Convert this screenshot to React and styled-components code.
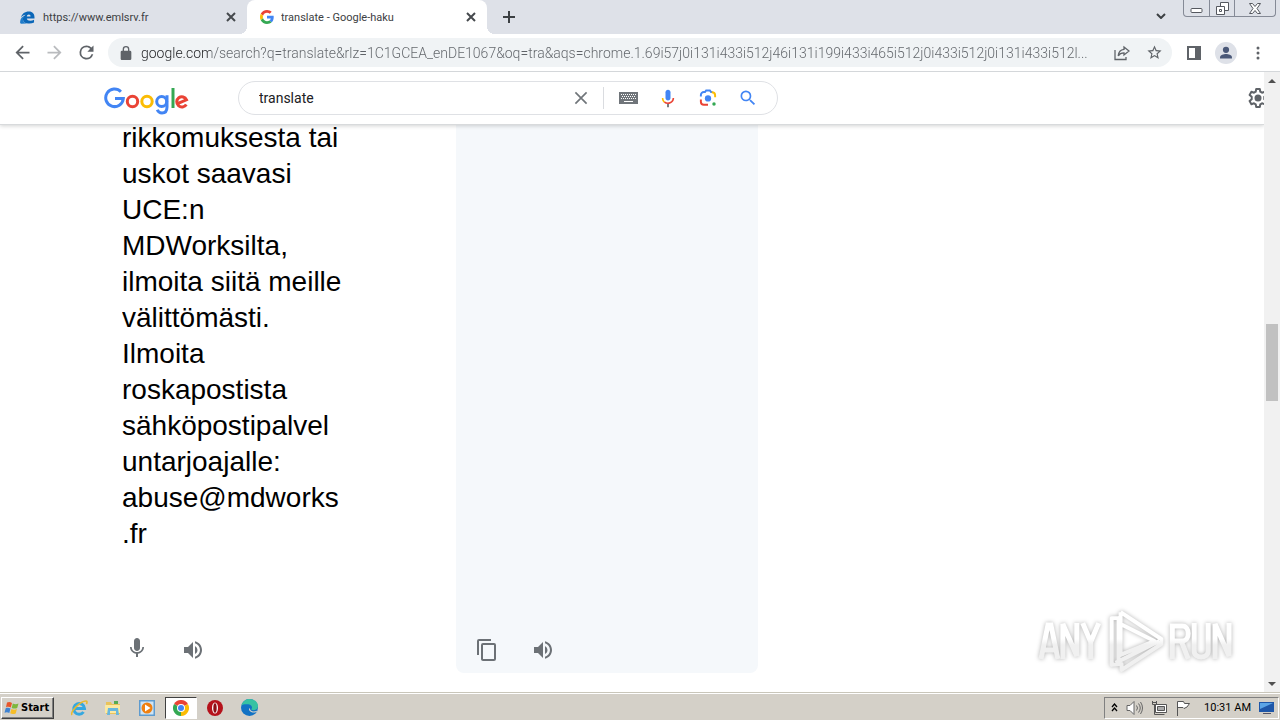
import React from 'react';
import styled, { createGlobalStyle, css } from 'styled-components';

const Global = createGlobalStyle`
  * { box-sizing: border-box; }
  body { margin: 0; background: #fff; font-family: Roboto, "Noto Sans", sans-serif; }
  button, input, textarea { font: inherit; color: inherit; margin: 0; padding: 0; border: 0; background: none; outline: 0; }
  svg { display: block; }
`;

const ui = css`font-family: Roboto, "Noto Sans", sans-serif;`;

const Desktop = styled.div`
  display: flex;
  flex-direction: column;
  height: 100vh;
  min-height: 480px;
  overflow: hidden;
`;

const TabStrip = styled.header`
  display: flex;
  align-items: flex-start;
  height: 34px;
  background: #dee1e8;
  flex: none;
`;

const Tab = styled.div`
  position: relative;
  display: flex;
  align-items: center;
  gap: 7px;
  width: ${(p) => (p.$active ? 240 : 247)}px;
  height: 34px;
  padding: 0 8px 0 ${(p) => (p.$active ? 13 : 20)}px;
  border-radius: 8px 8px 0 0;
  color: #3c4043;
  ${ui}
  font-size: 11px;
  ${(p) => p.$active && css`
    background: #fff;
    &::before, &::after {
      content: '';
      position: absolute;
      bottom: 0;
      width: 8px;
      height: 8px;
    }
    &::before {
      right: 100%;
      background: radial-gradient(circle at 0 0, transparent 8px, #fff 8px);
    }
    &::after {
      left: 100%;
      background: radial-gradient(circle at 100% 0, transparent 8px, #fff 8px);
    }
  `}
`;

const TabTitle = styled.span`
  flex: 1;
  white-space: nowrap;
  overflow: hidden;
`;

const IconButton = styled.button`
  display: flex;
  align-items: center;
  justify-content: center;
  flex: none;
  width: ${(p) => p.$size || 32}px;
  height: ${(p) => p.$size || 32}px;
  color: ${(p) => p.$color || '#5f6368'};
  border-radius: 50%;
`;

const NewTab = styled(IconButton)`margin: 1px 0 0 6px;`;

const Caption = styled.div`
  display: flex;
  margin: 0 4px 0 6px;
  border: 1px solid #858a96;
  border-top: 0;
  border-radius: 0 0 4px 4px;
`;

const CaptionButton = styled.button`
  display: flex;
  align-items: center;
  justify-content: center;
  width: ${(p) => (p.$wide ? 41 : 25)}px;
  height: 16px;
  & + & { border-left: 1px solid #858a96; }
`;

const Spacer = styled.div`flex: 1;`;

const Toolbar = styled.div`
  display: flex;
  align-items: center;
  height: 38px;
  padding: 0 6px;
  border-bottom: 1px solid #d4d7da;
  background: #fff;
  flex: none;
`;

const AddressBar = styled.div`
  display: flex;
  align-items: center;
  flex: 1;
  min-width: 0;
  height: 29px;
  margin: 0 6px;
  padding: 0 2px 0 12px;
  border-radius: 15px;
  background: #f0f3f5;
`;

const UrlInput = styled.input`
  flex: 1;
  min-width: 0;
  margin-left: 9px;
  ${ui}
  font-size: 14px;
  font-weight: 300;
  color: transparent;
  background: linear-gradient(to right, #202124 70px, #5f6368 70px);
  background-clip: text;
`;

const Viewport = styled.div`
  display: flex;
  flex: 1;
  min-height: 0;
`;

const Page = styled.main`
  flex: 1;
  min-width: 0;
  overflow: hidden;
  background: #fff;
`;

const SearchHeader = styled.div`
  position: relative;
  z-index: 1;
  display: flex;
  align-items: center;
  height: 53px;
  padding-left: 104px;
  background: #fff;
  border-bottom: 1px solid #d8dadc;
  box-shadow: 0 1px 4px rgba(32, 33, 36, 0.2);
`;

const LogoLink = styled.a`
  display: block;
  width: 86px;
  height: 28px;
  margin: 6px 48px 0 0;
`;

const SearchBox = styled.form`
  display: flex;
  align-items: center;
  width: 540px;
  height: 34px;
  padding: 0 13px 0 20px;
  border: 1px solid #dfe1e5;
  border-radius: 17px;
`;

const SearchInput = styled.input`
  flex: 1;
  min-width: 0;
  font-size: 14px;
  color: #202124;
`;

const SearchTools = styled.div`
  display: flex;
  align-items: center;
  height: 22px;
  margin-left: 6px;
  padding-left: 8px;
  border-left: 1px solid #dadce0;
  gap: 8px;
`;

const SettingsClip = styled.div`
  width: 18px;
  overflow: hidden;
`;

const Translator = styled.section`
  display: flex;
  height: 100%;
  padding-left: 104px;
  margin-top: -5px;
`;

const Pane = styled.div`
  display: flex;
  flex-direction: column;
  width: ${(p) => (p.$target ? 302 : 352)}px;
  height: 553px;
  padding: 0 ${(p) => (p.$target ? 16 : 18)}px;
  background: ${(p) => (p.$target ? '#f5f8fb' : '#fff')};
  border-radius: 0 0 8px 8px;
`;

const SourceText = styled.textarea`
  display: block;
  flex: 1;
  width: 240px;
  resize: none;
  overflow: hidden;
  font-family: "Liberation Sans", Arial, sans-serif;
  font-size: 28px;
  line-height: 36px;
  color: #000;
`;

const PaneActions = styled.div`
  display: flex;
  gap: 24px;
  margin: auto 0 7px -1px;
`;

const ScrollTrack = styled.div`
  display: flex;
  flex-direction: column;
  align-items: center;
  width: 16px;
  background: #f1f1f1;
  flex: none;
`;

const ScrollButton = styled.button`
  display: flex;
  align-items: center;
  justify-content: center;
  width: 16px;
  height: 17px;
`;

const ScrollThumb = styled.div`
  width: 12px;
  height: 77px;
  margin: 235px 0 auto;
  background: #c1c1c1;
`;

const Watermark = styled.div`
  position: absolute;
  right: 46px;
  bottom: 47px;
  z-index: 2;
  pointer-events: none;
  filter: drop-shadow(0 0 2px rgba(0, 0, 0, 0.3));
`;

const Taskbar = styled.footer`
  display: flex;
  align-items: center;
  height: 28px;
  padding: 2px 0 0 1px;
  border-top: 1px solid #c9c6ba;
  background: #d4d0c8;
  box-shadow: inset 0 1px 0 #fff;
  flex: none;
`;

const StartButton = styled.button`
  display: flex;
  align-items: center;
  gap: 1px;
  height: 22px;
  width: 53px;
  padding-left: 2px;
  border: 1px solid;
  border-color: #fff #404040 #404040 #fff;
  box-shadow: inset -1px -1px 0 #808080;
  font-family: "DejaVu Sans Condensed", "DejaVu Sans", sans-serif;
  font-size: 11px;
  font-weight: 700;
  color: #000;
`;

const QuickLaunch = styled.div`
  display: flex;
  gap: 2px;
  margin-left: 9px;
`;

const TaskButton = styled.button`
  display: flex;
  align-items: center;
  justify-content: center;
  width: 32px;
  height: 22px;
  ${(p) => p.$pressed && css`
    background: #fff;
    border: 1px solid;
    border-color: #404040 #fff #fff #404040;
  `}
`;

const Tray = styled.div`
  display: flex;
  align-items: center;
  gap: 8px;
  height: 22px;
  padding: 0 3px 0 6px;
  margin-right: 1px;
  border: 1px solid;
  border-color: #808080 #fff #fff #808080;
  ${ui}
  font-size: 11px;
  color: #000;
`;

const Clock = styled.time`
  margin-left: 5px;
  white-space: nowrap;
`;

const Svg = ({ s = 16, w, h, vb = '0 0 24 24', children, ...rest }) => (
  <svg width={w || s} height={h || s} viewBox={vb} fill="currentColor" aria-hidden="true" {...rest}>{children}</svg>
);

const Close = ({ s = 10, sw = 2 }) => (
  <Svg s={s} vb="0 0 10 10"><path d="M1 1l8 8M9 1l-8 8" stroke="currentColor" strokeWidth={sw} /></Svg>
);

const GoogleG = () => (
  <Svg s={14} vb="0 0 48 48">
    <path fill="#EA4335" d="M24 9.5c3.54 0 6.71 1.22 9.21 3.6l6.85-6.85C35.9 2.38 30.47 0 24 0 14.62 0 6.51 5.38 2.56 13.22l7.98 6.19C12.43 13.72 17.74 9.5 24 9.5z" />
    <path fill="#4285F4" d="M46.98 24.55c0-1.57-.15-3.09-.38-4.55H24v9.02h12.94c-.58 2.96-2.26 5.48-4.78 7.18l7.73 6c4.51-4.18 7.09-10.36 7.09-17.65z" />
    <path fill="#FBBC05" d="M10.53 28.59c-.48-1.45-.76-2.99-.76-4.59s.27-3.14.76-4.59l-7.98-6.19C.92 16.46 0 20.12 0 24c0 3.88.92 7.54 2.56 10.78l7.97-6.19z" />
    <path fill="#34A853" d="M24 48c6.48 0 11.93-2.13 15.89-5.81l-7.73-6c-2.15 1.45-4.92 2.3-8.16 2.3-6.26 0-11.57-4.22-13.47-9.91l-7.98 6.19C6.51 42.62 14.62 48 24 48z" />
  </Svg>
);

const EdgeLegacy = () => (
  <Svg w={16} h={13} vb="0 0 17 14">
    <path fill="#0b67b8" d="M1 7C2 3 5 .6 9.500 .6c4 0 6 2.600 6 6.400v1.200H7.200c.3 1.700 1.800 2.300 3.700 2.300 1.500 0 2.900-.4 4.100-1v3c-1.500.7-3.100 1-4.900 1C5.700 13.500 3 11.600 3 8.500c0-2 1.200-3.600 3-4.500C3.500 4.300 2 5.500 1 7zm6.200-1.200h4.100c0-1.300-.7-2.100-1.900-2.100-1.300 0-2 .8-2.200 2.100z" />
    <path fill="#1f7dcb" d="M0 13C0 8 2.500 6 4.500 5.500 3.500 6.500 3 7.500 3 8.500c0 2.600 1.800 4.500 4.500 5L1 13.600z" />
  </Svg>
);

const GoogleLogo = () => (
  <svg width="86" height="28" viewBox="0 0 86 28" fill="none" strokeWidth="3" role="img" aria-label="Google">
    <path stroke="#4285F4" d="M16.900 4.700A8.800 8.800 0 1 0 19.300 11.600H11" />
    <circle stroke="#EA4335" cx="28.500" cy="14.500" r="5.200" />
    <circle stroke="#FBBC05" cx="43" cy="14.500" r="5.200" />
    <g stroke="#4285F4"><circle cx="57.700" cy="14.500" r="5" /><path d="M63 8.200v11.800c0 4.400-2.300 6-5 6-2.300 0-4-1.400-4.700-3.200" /></g>
    <path stroke="#34A853" d="M69 1v20" />
    <path stroke="#EA4335" d="M73.500 16.700l9-3.900a5.100 5.100 0 1 0-.2 4.600" />
  </svg>
);

const MicPath = 'M12 15c1.660 0 3-1.340 3-3V5c0-1.660-1.340-3-3-3S9 3.340 9 5v7c0 1.660 1.340 3 3 3z';

const ColorMic = () => (
  <Svg s={20}>
    <path fill="#4285f4" d={MicPath} />
    <path fill="#5f6368" d="M11 18.900h2V23h-2z" />
    <path fill="#fbbc04" d="M6.500 12H4.600c0 2.300 1 4.300 2.500 5.600l1.400-1.300C7.300 15.300 6.500 13.800 6.500 12z" />
    <path fill="#ea4335" d="M12 17.300c-1.300 0-2.500-.4-3.500-1.100l-1.400 1.400A7.600 7.600 0 0 0 12 19.300c4 0 7.400-3.200 7.400-7.300h-1.900c0 3-2.500 5.300-5.500 5.300z" />
  </Svg>
);

const Lens = () => (
  <Svg s={18} fill="none" strokeWidth="2.600">
    <path stroke="#4285f4" d="M2.500 10V8a4 4 0 0 1 4-4H8l1.500-2h5L16 4h2" />
    <path stroke="#fbbc04" d="M17 4.200c3 0 4.500 1.800 4.500 4.300V11" />
    <path stroke="#ea4335" d="M2.500 14v3a4 4 0 0 0 4 4H12" />
    <circle cx="12" cy="12.500" r="4.200" fill="#4285f4" />
    <circle cx="20" cy="20" r="2.300" fill="#34a853" />
  </Svg>
);

const Keyboard = () => (
  <Svg w={19} h={12} vb="0 0 19 12">
    <path fill="#70757a" d="M0 0h19v12H0z" />
    <path stroke="#fff" strokeDasharray="1 1" d="M2 2.500h15M3 4.500h14M2 6.500h15" />
    <path stroke="#fff" d="M5 9.500h9" />
  </Svg>
);

const Search = () => (
  <Svg s={20}><path d="M15.500 14h-.79l-.28-.27A6.470 6.470 0 0 0 16 9.500 6.500 6.500 0 1 0 9.500 16c1.610 0 3.090-.59 4.230-1.570l.27.28v.79l5 4.990L20.490 19l-4.990-5zm-6 0C7.010 14 5 11.990 5 9.500S7.010 5 9.500 5 14 7.010 14 9.500 11.990 14 9.500 14z" /></Svg>
);

const Gear = () => (
  <Svg s={24} fill="none" stroke="#5f6368" strokeWidth="2">
    <path strokeLinejoin="round" d="M10.200 3h3.600l.5 2.700 1.700 1 2.600-.9 1.800 3.100-2.100 1.800v2.600l2.100 1.800-1.800 3.100-2.600-.9-1.700 1-.5 2.700h-3.600l-.5-2.700-1.700-1-2.600.9-1.800-3.100 2.100-1.800v-2.600L3.600 8.900l1.800-3.100 2.600.9 1.700-1z" />
    <circle cx="12" cy="12" r="3.500" fill="#5f6368" stroke="none" />
  </Svg>
);

const Speaker = () => (
  <Svg s={24}><path d="M3 9v6h4l5 5V4L7 9H3zm13.500 3A4.500 4.500 0 0 0 14 7.970v8.050c1.480-.73 2.500-2.250 2.500-4.020zM14 3.230v2.060c2.890.86 5 3.540 5 6.710s-2.110 5.850-5 6.710v2.060c4.010-.91 7-4.490 7-8.770s-2.990-7.860-7-8.770z" /></Svg>
);

const Mic = () => (
  <Svg s={24} vb="0 2 24 24"><path d={MicPath} /><path d="M17.300 11c0 3-2.540 5.100-5.300 5.100S6.700 14 6.700 11H5c0 3.410 2.720 6.230 6 6.720V21h2v-3.280c3.280-.48 6-3.300 6-6.720z" /></Svg>
);

const Copy = () => (
  <Svg s={24}><path d="M16 1H4a2 2 0 0 0-2 2v14h2V3h12V1zm3 4H8a2 2 0 0 0-2 2v14c0 1.100.9 2 2 2h11a2 2 0 0 0 2-2V7a2 2 0 0 0-2-2zm0 16H8V7h11v14z" /></Svg>
);

const AnyRun = () => (
  <svg width="197" height="64" viewBox="0 0 198 64" fill="none" stroke="url(#fade)" strokeWidth="4" aria-label="ANY.RUN" role="img">
    <defs>
      <linearGradient id="fade" gradientUnits="userSpaceOnUse" x1="0" y1="30" x2="0" y2="36">
        <stop offset="0" stopColor="#fff" />
        <stop offset="1" stopColor="#f0f0f0" />
      </linearGradient>
    </defs>
    <g strokeWidth="5">
      <path d="M4 50l7-34h3l7 34M6 41h13" />
      <path d="M26 50V15l14 32V14" />
      <path d="M46 14l8 19 8-19M54 32v18" />
      <path d="M136 50V17h10c8 0 8 15 0 15h-9M145 32l7 18" />
      <path d="M158 14v28c0 8 14 8 14 0V14" />
      <path d="M179 50V15l14 32V14" />
    </g>
    <path strokeLinejoin="round" d="M84 3l41 27v5L85 61v-6l-10 1V9h7v42M84 3v43l34-14-34-17M79 54l44-22" />
  </svg>
);

const StartFlag = () => (
  <Svg s={16} vb="0 0 16 16">
    <path fill="#e8562b" d="M3 2.500C5 1.500 6.500 2 8 3L6.800 7.500C5.500 6.700 3.800 6.500 2 7.200z" />
    <path fill="#7db73c" d="M8.800 3.400c1.800 1 3.600 1 5.700 0l-1.300 4.500c-1.800.9-3.700.8-5.500 0z" />
    <path fill="#3f83d2" d="M1.700 8.200c1.900-.7 3.300-.5 4.800.4L5.300 13C3.800 12 2.200 12 .5 12.700z" />
    <path fill="#f6bd27" d="M7.400 9c1.900.9 3.600.9 5.500.1l-1.200 4.300c-2 .9-3.900.9-5.500-.1z" />
  </Svg>
);

const IE = () => (
  <Svg s={18} vb="0 0 18 18" fill="none">
    <path stroke="#35a8e0" strokeWidth="3" d="M4 9.500h10.500A5.400 5.400 0 1 0 13.500 13" />
    <path stroke="#e9b92c" strokeWidth="1.500" d="M2 16C0 13 10 2 16 2c1.500 0 1 2 .4 3" />
  </Svg>
);

const Explorer = () => (
  <Svg s={18} vb="0 0 18 18">
    <path fill="#e9c35b" d="M2 3h5l1 2h8v10H2z" /><path fill="#fbe9a2" d="M1 6h15v8H1z" />
    <path fill="#69b7dd" d="M4 9h10l1 7h-3v-4H6v4H3z" /><path fill="#56ab52" d="M10 2h4v3h-4z" />
  </Svg>
);

const MediaPlayer = () => (
  <Svg s={16} vb="0 0 16 16">
    <path fill="#5e9bcf" d="M0 0h16v16H0z" /><path fill="#cfe4f5" d="M1.500 1.500h13v13h-13z" />
    <circle cx="8" cy="8" r="5.500" fill="#f08010" /><path fill="#fff" d="M6 4.500l5.500 3.500L6 11.500z" />
  </Svg>
);

const Chrome = () => (
  <Svg s={16} vb="0 0 16 16">
    <path fill="#ea4335" d="M8 8L1.070 4a8 8 0 0 1 13.860 0z" />
    <path fill="#fbbc04" d="M8 8l6.930-4A8 8 0 0 1 8 16z" />
    <path fill="#34a853" d="M8 8v8A8 8 0 0 1 1.070 4z" />
    <circle cx="8" cy="8" r="4" fill="#fff" /><circle cx="8" cy="8" r="3" fill="#4285f4" />
  </Svg>
);

const Opera = () => (
  <Svg s={16} vb="0 0 16 16"><circle cx="8" cy="8" r="8" fill="#b5121b" /><ellipse cx="8" cy="8" rx="3" ry="5.500" fill="#fff" /><ellipse cx="8" cy="8" rx="1.700" ry="4.800" fill="#8c0f16" /></Svg>
);

const EdgeNew = () => (
  <Svg s={17} vb="0 0 16 16">
    <circle cx="8" cy="8" r="8" fill="#1272c4" />
    <path fill="#37c2a3" d="M.5 6C1.500 2.500 4.500 0 8 0c4.500 0 8 3 8 6.500 0 2.500-2 4-4.500 4-1.500 0-2.200-.6-1.500-1.300C11 8 10 5.500 7 5 4 4.600 1.500 5 .5 6z" />
    <path fill="#d4d0c8" d="M8.200 8.500c0 2.500 3 4 6.300 2.700.6-.2.800.2.500.6-1.300 1.500-6 1.200-7.300-1.300-.4-.8-.1-1.600.5-2z" />
  </Svg>
);

const lines = [
  'rikkomuksesta tai', 'uskot saavasi', 'UCE:n', 'MDWorksilta,', 'ilmoita siitä meille', 'välittömästi.',
  'Ilmoita', 'roskapostista', 'sähköpostipalvel', 'untarjoajalle:', 'abuse@mdworks', '.fr',
];

const url = 'google.com/search?q=translate&rlz=1C1GCEA_enDE1067&oq=tra&aqs=chrome.1.69i57j0i131i433i512j46i131i199i433i465i512j0i433i512j0i131i433i512l...';

export default function App() {
  return (
    <Desktop>
      <Global />
      <TabStrip>
        <Tab>
          <EdgeLegacy />
          <TabTitle>https://www.emlsrv.fr</TabTitle>
          <IconButton $size={16} $color="#45494d" aria-label="Close tab"><Close /></IconButton>
        </Tab>
        <Tab $active>
          <GoogleG />
          <TabTitle>translate - Google-haku</TabTitle>
          <IconButton $size={16} $color="#45494d" aria-label="Close tab"><Close /></IconButton>
        </Tab>
        <NewTab $color="#3c4043" aria-label="New tab">
          <Svg s={12} vb="0 0 12 12"><path d="M6 0v12M0 6h12" stroke="currentColor" strokeWidth="2" /></Svg>
        </NewTab>
        <Spacer />
        <IconButton $color="#3c4043" aria-label="Search tabs">
          <Svg w={10} h={6} vb="0 0 10 6" fill="none"><path d="M1 1l4 4 4-4" stroke="currentColor" strokeWidth="2" /></Svg>
        </IconButton>
        <Caption>
          <CaptionButton aria-label="Minimize"><Svg w={13} h={16} vb="0 0 13 16" fill="#fff" stroke="#55585f"><rect x="1" y="8.500" width="11" height="4" rx="1" /></Svg></CaptionButton>
          <CaptionButton aria-label="Restore"><Svg w={13} h={13} vb="0 0 13 13" fill="#fff" stroke="#55585f"><path d="M4.500 .5h8v8h-8z" /><path d="M.5 4.500h8v8h-8z" /><path d="M3.500 7.500h2v2h-2z" /></Svg></CaptionButton>
          <CaptionButton $wide aria-label="Close"><Svg w={12} h={11} vb="0 0 12 11" fill="#fff" stroke="#55585f"><path d="M.5 .5h3L6 3.500 8.500 .5h3L8 5.500l3.500 5h-3L6 7.500l-2.500 3h-3L4 5.500z" /></Svg></CaptionButton>
        </Caption>
      </TabStrip>
      <Toolbar>
        <IconButton aria-label="Back"><Svg s={21}><path d="M20 11H7.830l5.590-5.590L12 4l-8 8 8 8 1.410-1.410L7.830 13H20v-2z" /></Svg></IconButton>
        <IconButton $color="#b9bbbe" aria-label="Forward"><Svg s={21}><path d="M12 4l-1.410 1.410L16.170 11H4v2h12.170l-5.580 5.590L12 20l8-8z" /></Svg></IconButton>
        <IconButton aria-label="Reload"><Svg s={21}><path d="M17.650 6.350A7.960 7.960 0 0 0 12 4a8 8 0 1 0 7.730 10h-2.080A6 6 0 1 1 12 6c1.660 0 3.140.69 4.220 1.780L13 11h7V4l-2.350 2.350z" /></Svg></IconButton>
        <AddressBar>
          <Svg w={12} h={14} vb="4 1 16 21" fill="#5f6368"><path d="M18 8h-1V6A5 5 0 0 0 7 6v2H6a2 2 0 0 0-2 2v10c0 1.100.9 2 2 2h12a2 2 0 0 0 2-2V10a2 2 0 0 0-2-2zM9 6a3 3 0 0 1 6 0v2H9z" /></Svg>
          <UrlInput aria-label="Address" defaultValue={url} />
          <IconButton aria-label="Share"><Svg s={16} vb="0 0 16 16" fill="none" stroke="currentColor" strokeWidth="1.300"><path d="M1 5v9.500h11V12M10 2l5 4-5 4V7.800c-3 0-4.600 1-5.800 3C4.500 7.500 6.300 4.700 10 4.300z" /></Svg></IconButton>
          <IconButton aria-label="Bookmark"><Svg s={17}><path d="M22 9.240l-7.190-.62L12 2 9.190 8.630 2 9.240l5.460 4.730L5.820 21 12 17.270 18.180 21l-1.630-7.030L22 9.240zM12 15.400l-3.760 2.270 1-4.280-3.320-2.880 4.380-.38L12 6.100l1.710 4.040 4.380.38-3.320 2.880 1 4.280L12 15.400z" /></Svg></IconButton>
        </AddressBar>
        <IconButton aria-label="Side panel"><Svg s={14} vb="0 0 14 14"><path d="M0 0h14v14H0zm2 2v10h6V2z" fillRule="evenodd" /></Svg></IconButton>
        <IconButton aria-label="Profile">
          <Svg s={22}><circle cx="12" cy="12" r="12" fill="#dee1e8" /><circle cx="12" cy="8.500" r="3.400" fill="#4a5878" /><path fill="#4a5878" d="M5.500 18v-1.500c0-2.200 4-3.500 6.500-3.500s6.500 1.300 6.500 3.500V18z" /></Svg>
        </IconButton>
        <IconButton aria-label="Menu"><Svg w={4} h={14} vb="0 0 4 14"><circle cx="2" cy="2" r="1.500" /><circle cx="2" cy="7" r="1.500" /><circle cx="2" cy="12" r="1.500" /></Svg></IconButton>
      </Toolbar>
      <Viewport>
        <Page>
          <SearchHeader>
            <LogoLink href="#home"><GoogleLogo /></LogoLink>
            <SearchBox role="search">
              <SearchInput aria-label="Search" defaultValue="translate" />
              <IconButton type="button" $color="#70757a" aria-label="Clear"><Close s={14} sw={1.2} /></IconButton>
              <SearchTools>
                <IconButton type="button" aria-label="Keyboard"><Keyboard /></IconButton>
                <IconButton type="button" aria-label="Voice search"><ColorMic /></IconButton>
                <IconButton type="button" aria-label="Image search"><Lens /></IconButton>
                <IconButton type="button" $color="#4285f4" aria-label="Search"><Search /></IconButton>
              </SearchTools>
            </SearchBox>
            <Spacer />
            <SettingsClip><IconButton $size={24} aria-label="Settings"><Gear /></IconButton></SettingsClip>
          </SearchHeader>
          <Translator>
            <Pane>
              <SourceText aria-label="Source text" spellCheck={false} defaultValue={lines.join('\n')} />
              <PaneActions>
                <IconButton $color="#6c7176" aria-label="Speak"><Mic /></IconButton>
                <IconButton $color="#6c7176" aria-label="Listen"><Speaker /></IconButton>
              </PaneActions>
            </Pane>
            <Pane $target>
              <PaneActions>
                <IconButton $color="#6c7176" aria-label="Copy"><Copy /></IconButton>
                <IconButton $color="#6c7176" aria-label="Listen"><Speaker /></IconButton>
              </PaneActions>
            </Pane>
          </Translator>
        </Page>
        <ScrollTrack>
          <ScrollButton aria-label="Scroll up"><Svg w={8} h={4} vb="0 0 8 4" fill="#505050"><path d="M0 4l4-4 4 4z" /></Svg></ScrollButton>
          <ScrollThumb />
          <ScrollButton aria-label="Scroll down"><Svg w={8} h={4} vb="0 0 8 4" fill="#505050"><path d="M0 0h8L4 4z" /></Svg></ScrollButton>
        </ScrollTrack>
      </Viewport>
      <Watermark><AnyRun /></Watermark>
      <Taskbar>
        <StartButton><StartFlag />Start</StartButton>
        <QuickLaunch>
          <TaskButton aria-label="Internet Explorer"><IE /></TaskButton>
          <TaskButton aria-label="Explorer"><Explorer /></TaskButton>
          <TaskButton aria-label="Media Player"><MediaPlayer /></TaskButton>
          <TaskButton $pressed aria-label="Chrome"><Chrome /></TaskButton>
          <TaskButton aria-label="Opera"><Opera /></TaskButton>
          <TaskButton aria-label="Edge"><EdgeNew /></TaskButton>
        </QuickLaunch>
        <Spacer />
        <Tray>
          <Svg w={7} h={9} vb="0 0 7 9" fill="none" stroke="#000" strokeWidth="1.300"><path d="M1 4l2.500-3L6 4M1 8l2.500-3L6 8" /></Svg>
          <Svg w={17} h={16} vb="0 0 17 16" fill="#fff" stroke="#666"><path d="M1 5.500h3l4-4v13l-4-4H1z" /><path fill="none" d="M10.500 5.500q2 2.500 0 5M12.500 3.500q3.500 4.500 0 9M14.500 2q4 6 0 12" /></Svg>
          <Svg s={16} vb="0 0 16 16" fill="#fff" stroke="#555"><path d="M4.500 4.500h11v8h-11z" /><path d="M1.500 1v3.500h4V1M3.500 4.500v10h10M1.500 2.500h4" fill="none" /><path fill="#aaa" d="M6.500 6.500h7v4h-7z" /></Svg>
          <Svg s={16} vb="0 0 16 16" fill="#fff" stroke="#555"><path d="M2.500 16V1.500h6l1 2h5L12 7l-3 1.500-1-1H2.500" /></Svg>
          <Clock>10:31 AM</Clock>
          <Svg w={16} h={14} vb="0 0 16 14"><path fill="#1f57a8" d="M0 1h15v10H0z" /><path fill="#5ca5e6" d="M1 2h13L1 8z" /><path fill="#556" d="M4 12h8v1H4z" /></Svg>
        </Tray>
      </Taskbar>
    </Desktop>
  );
}
